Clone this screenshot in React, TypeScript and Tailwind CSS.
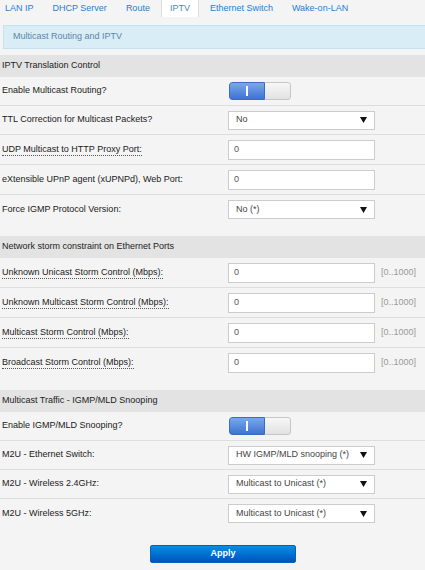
import React from "react";

const Arrow = () => (
  <svg width="7" height="6" viewBox="0 0 7 6" className="shrink-0">
    <polygon points="0,0 7,0 3.5,6" fill="#111" />
  </svg>
);

const Toggle = () => (
  <div className="flex h-[18px] w-[62px] rounded-[3px] overflow-hidden">
    <div className="flex w-[36px] items-center justify-center border border-[#3b6cc0] rounded-l-[3px] bg-gradient-to-b from-[#79a8ec] to-[#3e73d2]">
      <div className="h-[10px] w-[2px] bg-white" />
    </div>
    <div className="flex-1 border border-l-0 border-[#c6c6c6] rounded-r-[3px] bg-gradient-to-b from-[#f7f7f7] to-[#e2e2e2]" />
  </div>
);

const Select = ({ value }: { value: string }) => (
  <div className="flex h-[19px] w-[147px] items-center justify-between border border-[#cccccc] bg-white pl-[7px] pr-[7px] text-[#444]">
    <span>{value}</span>
    <Arrow />
  </div>
);

const Input = ({ value }: { value: string }) => (
  <div className="flex h-[20px] w-[147px] items-center border border-[#cccccc] bg-white pl-[5px] text-[#555]">
    {value}
  </div>
);

type RowProps = {
  label: string;
  dotted?: boolean;
  h: string;
  last?: boolean;
  children?: React.ReactNode;
  range?: boolean;
};

const Row = ({ label, dotted, h, last, children, range }: RowProps) => (
  <div className={`flex items-center ${h} ${last ? "" : "border-b border-[#dddddd]"}`}>
    <div className="w-[228px] shrink-0 pl-[2px] text-[#1a1a1a]">
      {dotted ? (
        <span className="border-b border-dotted border-[#555] pb-[1px]">{label}</span>
      ) : (
        <span>{label}</span>
      )}
    </div>
    {children}
    {range && <span className="ml-[6px] text-[#9a9a9a]">[0..1000]</span>}
  </div>
);

const Header = ({ title }: { title: string }) => (
  <div className="flex h-[22px] w-[440px] items-center bg-[#e3e3e3] pl-[2px] text-[#222]">{title}</div>
);

export default function App() {
  const tabs = ["LAN IP", "DHCP Server", "Route", "IPTV", "Ethernet Switch", "Wake-on-LAN"];
  return (
    <div
      className="relative h-[570px] w-[425px] overflow-hidden bg-[#f4f4f4] text-[9px]"
      style={{ fontFamily: '"Liberation Sans", Arial, sans-serif' }}
    >
      <div className="flex h-[17px] items-stretch">
        {tabs.map((t, i) => (
          <div
            key={t}
            className={`flex items-center px-[8px] ${i === 0 ? "ml-[-3px]" : "ml-[3px]"} ${
              t === "IPTV"
                ? "bg-white border-l border-r border-[#dcdcdc] text-[#4f86bd]"
                : "text-[#1f80d2]"
            }`}
          >
            {t}
          </div>
        ))}
      </div>

      <div className="ml-[3px] mt-[8px] flex h-[24px] w-[440px] items-center border border-[#c4e3ee] bg-[#d9edf7] pl-[9px] text-[#5e85a6]">
        Multicast Routing and IPTV
      </div>

      <div className="mt-[6px]">
        <Header title="IPTV Translation Control" />
        <Row label="Enable Multicast Routing?" h="h-[29px]">
          <div className="ml-[1px]">
            <Toggle />
          </div>
        </Row>
        <Row label="TTL Correction for Multicast Packets?" h="h-[29px]">
          <Select value="No" />
        </Row>
        <Row label="UDP Multicast to HTTP Proxy Port:" dotted h="h-[30px]">
          <Input value="0" />
        </Row>
        <Row label="eXtensible UPnP agent (xUPNPd), Web Port:" h="h-[30px]">
          <Input value="0" />
        </Row>
        <Row label="Force IGMP Protocol Version:" h="h-[29px]" last>
          <Select value="No (*)" />
        </Row>
      </div>

      <div className="mt-[12px]">
        <Header title="Network storm constraint on Ethernet Ports" />
        <Row label="Unknown Unicast Storm Control (Mbps):" dotted h="h-[30px]" range>
          <Input value="0" />
        </Row>
        <Row label="Unknown Multicast Storm Control (Mbps):" dotted h="h-[30px]" range>
          <Input value="0" />
        </Row>
        <Row label="Multicast Storm Control (Mbps):" dotted h="h-[30px]" range>
          <Input value="0" />
        </Row>
        <Row label="Broadcast Storm Control (Mbps):" dotted h="h-[30px]" range last>
          <Input value="0" />
        </Row>
      </div>

      <div className="mt-[12px]">
        <Header title="Multicast Traffic - IGMP/MLD Snooping" />
        <Row label="Enable IGMP/MLD Snooping?" h="h-[29px]">
          <div className="ml-[1px]">
            <Toggle />
          </div>
        </Row>
        <Row label="M2U - Ethernet Switch:" h="h-[29px]">
          <Select value="HW IGMP/MLD snooping (*)" />
        </Row>
        <Row label="M2U - Wireless 2.4GHz:" h="h-[29px]">
          <Select value="Multicast to Unicast (*)" />
        </Row>
        <Row label="M2U - Wireless 5GHz:" h="h-[29px]" last>
          <Select value="Multicast to Unicast (*)" />
        </Row>
      </div>

      <div className="mt-[17px] flex justify-start pl-[150px]">
        <button className="h-[18px] w-[146px] rounded-[2px] border border-[#0a5fb4] bg-gradient-to-b from-[#0a8fe0] to-[#0052bf] text-[9px] font-bold text-white">
          Apply
        </button>
      </div>
    </div>
  );
}
